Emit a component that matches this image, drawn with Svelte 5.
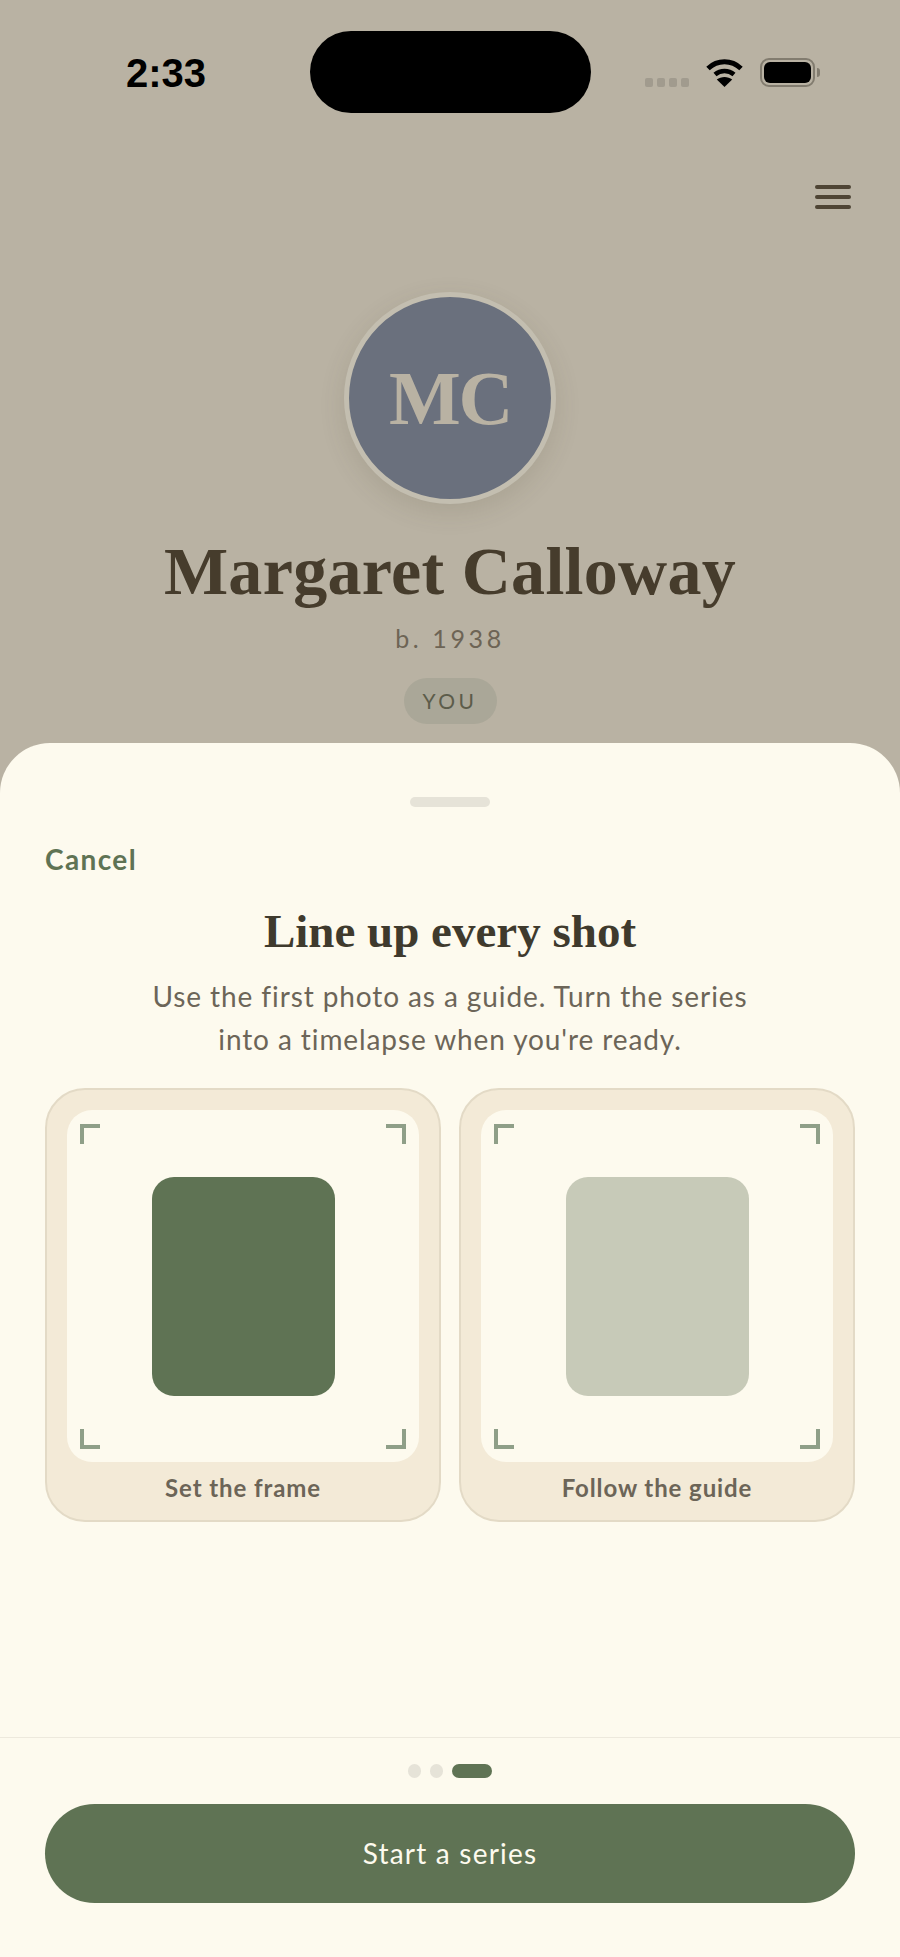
<script>
  const cards = [
    { label: 'Set the frame', ghost: false },
    { label: 'Follow the guide', ghost: true }
  ];
  const corners = ['tl', 'tr', 'bl', 'br'];
</script>

<div class="screen">
  <div class="page">
    <div class="status">
      <div class="time">2:33</div>
      <div class="island"></div>
      <div class="sys">
        <div class="signal"><i></i><i></i><i></i><i></i></div>
        <svg class="wifi" width="37" height="28" viewBox="0 0 37 28" aria-hidden="true">
          <path d="M2 9.5C11.5 .6 25.5 .6 35 9.5" fill="none" stroke="#000" stroke-width="5"/>
          <path d="M9 15.6C14.5 10.8 22.5 10.8 28 15.6" fill="none" stroke="#000" stroke-width="4.6"/>
          <path d="M18.5 28L10.8 20.6C15 17.2 22 17.2 26.2 20.6Z" fill="#000"/>
        </svg>
        <div class="battery"><div class="cell"></div><div class="nub"></div></div>
      </div>
    </div>
    <div class="menu"><i></i><i></i><i></i></div>
    <div class="profile">
      <div class="avatar">MC</div>
      <h1>Margaret Calloway</h1>
      <div class="born">b. 1938</div>
      <div class="badge">YOU</div>
    </div>
  </div>

  <div class="sheet">
    <div class="handle"></div>
    <div class="cancel">Cancel</div>
    <h2>Line up every shot</h2>
    <p>Use the first photo as a guide. Turn the series<br />into a timelapse when you're ready.</p>
    <div class="cards">
      {#each cards as card}
        <div class="card">
          <div class="frame">
            {#each corners as c}
              <span class="corner {c}"></span>
            {/each}
            <div class="photo" class:ghost={card.ghost}></div>
          </div>
          <div class="label">{card.label}</div>
        </div>
      {/each}
    </div>
    <div class="footer">
      <div class="dots"><i></i><i></i><i class="on"></i></div>
      <div class="cta">Start a series</div>
    </div>
  </div>
</div>

<style>
  :global(body) {
    margin: 0;
    background: #b9b2a3;
  }
  .screen {
    position: relative;
    width: 900px;
    height: 1957px;
    overflow: hidden;
    background: #b9b2a3;
    font-family: 'Lato', 'Liberation Sans', sans-serif;
  }
  .status {
    display: grid;
    grid-template-columns: 310px 281px 1fr;
    padding-top: 31px;
    height: 82px;
  }
  .time {
    padding-left: 126px;
    font: 700 40px/84px 'Liberation Sans', sans-serif;
    color: #000;
  }
  .island {
    background: #000;
    border-radius: 41px;
    height: 82px;
  }
  .sys {
    display: flex;
    align-items: flex-start;
    padding: 27px 0 0 54px;
  }
  .signal {
    display: flex;
    gap: 4px;
    margin-top: 20px;
  }
  .signal i {
    width: 8px;
    height: 9px;
    border-radius: 2px;
    background: #a19b8e;
  }
  .wifi {
    margin-left: 17px;
    margin-top: 1px;
  }
  .battery {
    position: relative;
    box-sizing: border-box;
    width: 55px;
    height: 29px;
    margin-left: 17px;
    padding: 2px;
    border: 2px solid #827c6f;
    border-radius: 9px;
  }
  .cell {
    height: 21px;
    background: #000;
    border-radius: 6px;
  }
  .nub {
    position: absolute;
    right: -7px;
    top: 8px;
    width: 3px;
    height: 9px;
    background: #827c6f;
    border-radius: 0 3px 3px 0;
  }
  .menu {
    display: flex;
    flex-direction: column;
    gap: 6px;
    width: 36px;
    margin: 72px 0 0 815px;
  }
  .menu i {
    height: 4px;
    border-radius: 2px;
    background: #4f4535;
  }
  .profile {
    display: flex;
    flex-direction: column;
    align-items: center;
    margin-top: 83px;
  }
  .avatar {
    box-sizing: border-box;
    width: 212px;
    height: 212px;
    border: 5px solid #c3beb0;
    border-radius: 50%;
    background: #6a707d;
    box-shadow: 0 8px 26px rgba(80, 70, 50, 0.14);
    color: #b9b2a3;
    font: 700 76px/202px 'Liberation Serif', serif;
    letter-spacing: -2.4px;
    text-align: center;
  }
  h1 {
    margin: 22px 0 0;
    font: 700 68px/90px 'Liberation Serif', serif;
    letter-spacing: 0.3px;
    color: #463c2c;
  }
  .born {
    margin-top: 4px;
    font-size: 25px;
    line-height: 36px;
    letter-spacing: 3.6px;
    color: #6d6455;
  }
  .badge {
    box-sizing: border-box;
    height: 46px;
    width: 93px;
    margin-top: 22px;
    border-radius: 23px;
    background: #aaa798;
    color: #5c5c4a;
    font-size: 21px;
    line-height: 46px;
    letter-spacing: 3.4px;
    text-align: center;
  }
  .sheet {
    position: absolute;
    left: 0;
    right: 0;
    top: 743px;
    bottom: 0;
    display: flex;
    flex-direction: column;
    background: #fdfaee;
    border-radius: 50px 50px 0 0;
  }
  .handle {
    width: 80px;
    height: 10px;
    margin: 54px auto 0;
    border-radius: 5px;
    background: #e6e3d8;
  }
  .cancel {
    margin: 32px 45px 0;
    font-size: 28px;
    line-height: 40px;
    font-weight: 700;
    letter-spacing: 1.4px;
    color: #5f7354;
  }
  h2 {
    margin: 24px 0 0;
    text-align: center;
    font: 700 47px/56px 'Liberation Serif', serif;
    color: #3f3a2d;
  }
  p {
    margin: 16px 0 0;
    text-align: center;
    font-size: 28px;
    line-height: 43px;
    letter-spacing: 0.9px;
    color: #6c6558;
  }
  .cards {
    display: grid;
    grid-template-columns: 396px 396px;
    gap: 18px;
    margin: 27px 45px 0;
  }
  .card {
    box-sizing: border-box;
    height: 434px;
    padding: 20px 20px 0;
    border: 2.5px solid #e3dac6;
    border-radius: 40px;
    background: #f3ead7;
    text-align: center;
  }
  .frame {
    position: relative;
    box-sizing: border-box;
    height: 352px;
    padding-top: 67px;
    border-radius: 25px;
    background: #fdfaee;
  }
  .corner {
    position: absolute;
    width: 20px;
    height: 20px;
    box-sizing: border-box;
    border: 0 solid #8f9f88;
  }
  .tl { left: 13px; top: 14px; border-width: 4px 0 0 4px; }
  .tr { right: 13px; top: 14px; border-width: 4px 4px 0 0; }
  .bl { left: 13px; bottom: 13px; border-width: 0 0 4px 4px; }
  .br { right: 13px; bottom: 13px; border-width: 0 4px 4px 0; }
  .photo {
    width: 183px;
    height: 219px;
    margin: 0 auto;
    border-radius: 22px;
    background: #5f7354;
  }
  .photo.ghost {
    background: #c7cab8;
  }
  .label {
    margin-top: 7px;
    font-size: 24px;
    line-height: 38px;
    font-weight: 700;
    letter-spacing: 0.9px;
    color: #6c6558;
  }
  .footer {
    margin-top: auto;
    height: 220px;
    box-sizing: border-box;
    border-top: 1px solid #ede9dd;
    padding: 26px 45px 0;
  }
  .dots {
    display: flex;
    justify-content: center;
    gap: 9px;
    height: 14px;
  }
  .dots i {
    width: 13px;
    height: 14px;
    border-radius: 7px;
    background: #e6e3d8;
  }
  .dots i.on {
    width: 40px;
    background: #5f7354;
  }
  .cta {
    height: 99px;
    margin-top: 26px;
    border-radius: 50px;
    background: #5f7354;
    color: #fdfaee;
    font-size: 28px;
    line-height: 99px;
    letter-spacing: 1.2px;
    text-align: center;
  }
</style>
